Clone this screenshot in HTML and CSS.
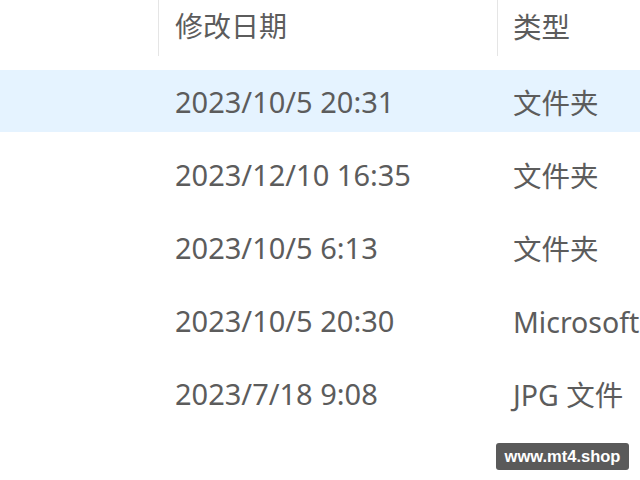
FILE: index.html
```html
<!DOCTYPE html>
<html lang="zh-CN">
<head>
<meta charset="utf-8">
<title>文件列表</title>
<link rel="stylesheet" href="styles.css">
</head>
<body>
<div class="list">
  <div class="header">
    <div class="col name"></div>
    <div class="col date">修改日期</div>
    <div class="col type">类型</div>
  </div>
  <div class="rows">
    <div class="row selected">
      <div class="col name"></div>
      <div class="col date">2023/10/5 20:31</div>
      <div class="col type">文件夹</div>
    </div>
    <div class="row">
      <div class="col name"></div>
      <div class="col date">2023/12/10 16:35</div>
      <div class="col type">文件夹</div>
    </div>
    <div class="row">
      <div class="col name"></div>
      <div class="col date">2023/10/5 6:13</div>
      <div class="col type">文件夹</div>
    </div>
    <div class="row">
      <div class="col name"></div>
      <div class="col date">2023/10/5 20:30</div>
      <div class="col type">Microsoft Excel 工作表</div>
    </div>
    <div class="row">
      <div class="col name"></div>
      <div class="col date">2023/7/18 9:08</div>
      <div class="col type">JPG 文件</div>
    </div>
  </div>
</div>
<div class="watermark">www.mt4.shop</div>
</body>
</html>
```

FILE: styles.css
```css
html, body {
  margin: 0;
  padding: 0;
  width: 640px;
  height: 480px;
  overflow: hidden;
  background: #ffffff;
}

body {
  position: relative;
  font-family: "Noto Sans", "Noto Sans CJK SC", sans-serif;
  font-size: 28px;
  color: #5c5c5c;
}

.list {
  display: flex;
  flex-direction: column;
}

.header {
  display: flex;
  height: 56px;
}

.header .col {
  display: flex;
  align-items: center;
  padding-bottom: 6px;
  box-sizing: border-box;
}

.header .name,
.header .date {
  border-right: 1px solid #e5e5e5;
}

.col {
  white-space: nowrap;
  overflow: hidden;
  box-sizing: border-box;
}

.name {
  width: 159px;
  flex: none;
}

.date {
  width: 339px;
  flex: none;
  padding-left: 16px;
  font-size: 29px;
}

.header .date {
  font-size: 28px;
}

.type {
  flex: 1;
  padding-left: 15px;
  font-size: 28.5px;
}

.rows {
  display: flex;
  flex-direction: column;
  gap: 11px;
  margin-top: 14px;
}

.row {
  display: flex;
  align-items: center;
  height: 62px;
}

.row.selected {
  background: #e5f3ff;
}

.watermark {
  position: absolute;
  left: 496px;
  top: 443px;
  width: 133px;
  height: 27px;
  box-sizing: border-box;
  background: #5a5a5a;
  border-radius: 3px;
  color: #ffffff;
  font-family: "Liberation Sans", Arial, sans-serif;
  font-weight: bold;
  font-size: 16.5px;
  line-height: 27px;
  text-align: center;
}
```
